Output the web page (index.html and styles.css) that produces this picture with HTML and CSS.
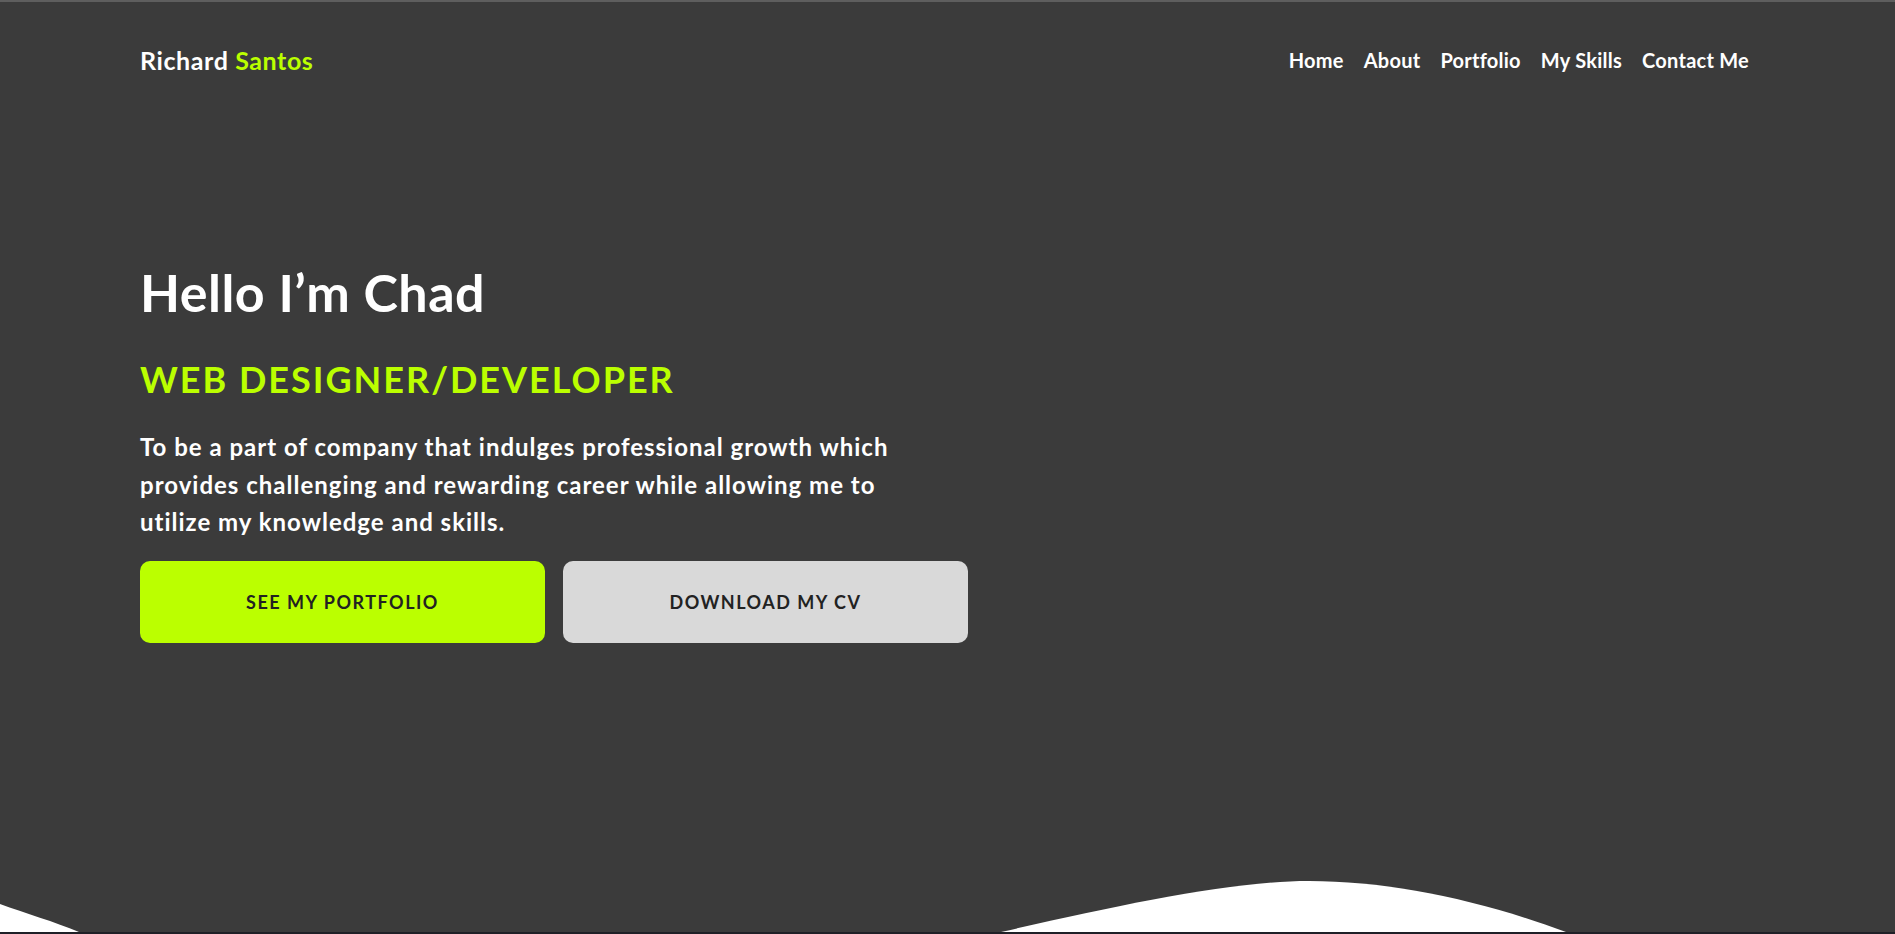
FILE: index.html
```html
<!DOCTYPE html>
<html lang="en">
<head>
<meta charset="utf-8">
<title>Richard Santos</title>
<link rel="stylesheet" href="styles.css">
</head>
<body>
<div class="page">
  <section class="hero">
    <header class="topbar">
      <a class="logo" href="#">Richard <span class="logo-accent">Santos</span></a>
      <nav class="menu">
        <a href="#">Home</a>
        <a href="#">About</a>
        <a href="#">Portfolio</a>
        <a href="#">My Skills</a>
        <a href="#">Contact Me</a>
      </nav>
    </header>
    <div class="intro">
      <h1 class="title">Hello I’m Chad</h1>
      <h2 class="role">WEB DESIGNER/DEVELOPER</h2>
      <p class="summary">To be a part of company that indulges professional growth which provides challenging and rewarding career while allowing me to utilize my knowledge and skills.</p>
      <div class="actions">
        <a class="btn btn-primary" href="#">SEE MY PORTFOLIO</a>
        <a class="btn btn-secondary" href="#">DOWNLOAD MY CV</a>
      </div>
    </div>
    <svg class="wave" viewBox="0 879 1895 53" preserveAspectRatio="none" aria-hidden="true">
      <path d="M0,904 C25,913 55,922 79,932 L0,932 Z" fill="#ffffff"/>
      <path d="M1001,932 C1120,905 1230,881 1309,881 C1390,881 1480,900 1566,932 Z" fill="#ffffff"/>
    </svg>
  </section>
  <div class="strip"></div>
</div>
</body>
</html>
```

FILE: styles.css
```css
* { box-sizing: border-box; }

html, body {
  margin: 0;
  padding: 0;
  background: #3b3b3b;
}

body {
  font-family: "Lato", "Noto Sans", sans-serif;
  color: #ffffff;
  overflow: hidden;
}

.page {
  height: 934px;
  display: flex;
  flex-direction: column;
}

.hero {
  height: 932px;
  display: flex;
  flex-direction: column;
  background: #3b3b3b;
  border-top: 2px solid #5e5e5e;
}

.topbar {
  display: flex;
  justify-content: space-between;
  align-items: flex-start;
  padding: 43px 146px 0 140px;
}

.logo {
  font-size: 25px;
  line-height: 30px;
  font-weight: 700;
  letter-spacing: 0.6px;
  color: #ffffff;
  text-decoration: none;
}

.logo-accent { color: #bbff00; }

.menu {
  display: flex;
  gap: 20px;
}

.menu a {
  font-size: 20px;
  line-height: 30px;
  font-weight: 700;
  letter-spacing: 0.25px;
  color: #ffffff;
  text-decoration: none;
}

.intro {
  padding: 0 0 0 140px;
  margin-top: 186px;
  display: flex;
  flex-direction: column;
  align-items: flex-start;
}

.title {
  margin: 0;
  font-size: 52px;
  line-height: 62px;
  font-weight: 700;
  letter-spacing: 0.5px;
}

.role {
  margin: 35px 0 0;
  font-size: 36px;
  line-height: 43px;
  font-weight: 700;
  letter-spacing: 2px;
  color: #bbff00;
}

.summary {
  margin: 27px 0 0;
  max-width: 800px;
  font-size: 24px;
  line-height: 37.5px;
  font-weight: 700;
  letter-spacing: 1px;
}

.actions {
  margin-top: 20px;
  display: flex;
  gap: 18px;
}

.btn {
  width: 405px;
  height: 82px;
  border-radius: 10px;
  display: flex;
  align-items: center;
  justify-content: center;
  font-size: 18px;
  font-weight: 700;
  letter-spacing: 1.5px;
  color: #222222;
  text-decoration: none;
}

.btn-primary { background: #bbff00; }
.btn-secondary { background: #d9d9d9; }

.wave {
  display: block;
  margin-top: auto;
  width: 100%;
  height: 53px;
}

.strip {
  height: 2px;
  background: #1f2027;
}
```
